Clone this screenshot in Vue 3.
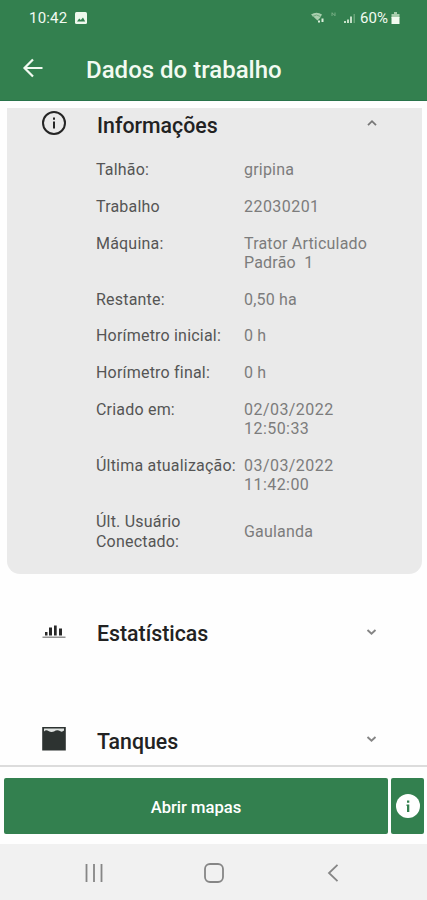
<!-- Job details screen: general information, statistics and tanks -->
<template>
  <div class="screen">
    <header class="header">
      <div class="status-bar">
        <span class="clock">10:42</span>
        <svg class="picture-icon" width="12" height="12" viewBox="0 0 12 12">
          <rect width="12" height="12" rx="1.5" fill="#eef8ed" />
          <path d="M2 9.5 4.2 6.5 5.8 8 8 5.5 10.2 9.5Z" fill="#33804f" />
        </svg>
        <div class="status-right">
          <svg width="50" height="14" viewBox="0 0 50 14">
            <path d="M1 3.500Q6.500 0 12 3.500L10 7 7.500 9.500Z" fill="#a9cfae" />
            <path d="M2.500 5.500Q6.500 2.500 10.500 5.500" fill="none" stroke="#6fa97e" />
            <path d="M8 11.500V9.500H10V11.500ZM11.500 11V7.500H13.500V11Z" fill="#dcefdc" />
            <path d="M22 1.500V5M22 2L25 4.500M25 1.500V5" fill="none" stroke="#75ac83" stroke-width="1" />
            <path d="M34 12V10H36V12ZM37 12V8.500H39V12ZM40 12V5.500H42V12Z" fill="#c5e0c8" />
            <path d="M43.500 12V3H45V12Z" fill="#69a579" />
          </svg>
          <span class="battery-text">60%</span>
          <svg width="9" height="13" viewBox="0 0 9 13">
            <path d="M3 0H6V2H8.500V6H.5V2H3Z" fill="#a7cdac" />
            <path d="M.5 5H8.500V12H.5Z" fill="#f1faef" />
          </svg>
        </div>
      </div>
      <div class="title-bar">
        <svg class="back" width="22" height="20" viewBox="0 0 22 20">
          <path d="M20.500 10H2.500M11 1.500 2.500 10 11 18.500" fill="none" stroke="#f2faf1" stroke-width="2.200" />
        </svg>
        <h1>Dados do trabalho</h1>
      </div>
    </header>

    <main class="content">
      <section class="card">
        <div class="section-head" @click="infoOpen = !infoOpen">
          <svg class="section-icon info-icon" width="26" height="26" viewBox="0 0 26 26">
            <circle cx="13" cy="13" r="11" fill="none" stroke="#252525" stroke-width="2" />
            <path d="M12 7.500H14V9.700H12ZM12 11.500H14V18.500H12Z" fill="#252525" />
          </svg>
          <h2>Informações</h2>
          <svg class="chevron up" :class="{ closed: !infoOpen }" width="12" height="8" viewBox="0 0 12 8">
            <path d="M2 6.200 6 2.200 10 6.200" fill="none" stroke="#777" stroke-width="1.800" />
          </svg>
        </div>
        <div v-show="infoOpen" class="rows">
          <div v-for="row in rows" :key="row.label" class="row">
            <span class="label">{{ row.label }}</span>
            <span class="value" :class="{ numeric: row.numeric }">{{ row.value }}</span>
          </div>
        </div>
      </section>

      <section class="section-head stats">
        <svg class="section-icon" width="26" height="26" viewBox="0 0 26 26">
          <path d="M4 16.500V13H6.500V16.500ZM8 16.500V8.500H11V16.500ZM13 16.500V6.500H15.700V16.500ZM18 16.500V9.500H21V16.500Z" fill="#292929" />
          <path d="M1.500 18.200H24.500" stroke="#777" stroke-width="1.200" />
        </svg>
        <h2>Estatísticas</h2>
        <svg class="chevron" width="12" height="8" viewBox="0 0 12 8">
          <path d="M1.500 2 5.500 5.700 9.500 2" fill="none" stroke="#858585" stroke-width="1.900" />
        </svg>
      </section>

      <section class="section-head tanks">
        <svg class="section-icon" width="26" height="26" viewBox="0 0 26 26">
          <path d="M1.200 1H24.800V24.500H1.200Z" fill="#2d3331" />
          <path d="M3 2.500H23V4.500Q21 6.500 19 5 16 3.500 13 5.500 10 6.500 7.500 5 5 3.500 3 5.500Z" fill="#dfe3e1" />
        </svg>
        <h2>Tanques</h2>
        <svg class="chevron" width="12" height="8" viewBox="0 0 12 8">
          <path d="M1.500 2 5.500 5.700 9.500 2" fill="none" stroke="#858585" stroke-width="1.900" />
        </svg>
      </section>
    </main>

    <footer class="actions">
      <button class="open-maps">Abrir mapas</button>
      <button class="info-button">
        <svg width="24" height="24" viewBox="0 0 24 24">
          <circle cx="12" cy="12" r="12" fill="#fff" />
          <path d="M11 6.500H13.300V8.700H11ZM10.500 10.500H13.300V18H11V12H10.500Z" fill="#33804f" />
        </svg>
      </button>
    </footer>

    <nav class="nav-bar">
      <svg width="18" height="18" viewBox="0 0 18 18">
        <path d="M1.500 0V18M9 0V18M16.500 0V18" stroke="#868686" stroke-width="1.800" />
      </svg>
      <svg class="home" width="20" height="20" viewBox="0 0 20 20">
        <rect x="1" y="1" width="18" height="18" rx="5" fill="none" stroke="#868686" stroke-width="1.800" />
      </svg>
      <svg width="12" height="18" viewBox="0 0 12 18">
        <path d="M10.500 .8 2 9 10.500 17.200" fill="none" stroke="#868686" stroke-width="1.800" />
      </svg>
    </nav>
  </div>
</template>

<script setup>
import { ref } from 'vue';

const infoOpen = ref(true);

const rows = [
  { label: 'Talhão:', value: 'gripina' },
  { label: 'Trabalho', value: '22030201', numeric: true },
  { label: 'Máquina:', value: 'Trator Articulado\nPadrão  1' },
  { label: 'Restante:', value: '0,50 ha' },
  { label: 'Horímetro inicial:', value: '0 h' },
  { label: 'Horímetro final:', value: '0 h' },
  { label: 'Criado em:', value: '02/03/2022\n12:50:33', numeric: true },
  { label: 'Última atualização:', value: '03/03/2022\n11:42:00', numeric: true },
  { label: 'Últ. Usuário\nConectado:', value: 'Gaulanda' },
];
</script>

<style>
body {
  margin: 0;
}
</style>

<style scoped>
.screen {
  width: 427px;
  height: 900px;
  display: flex;
  flex-direction: column;
  overflow: hidden;
  background-color: #fefefe;
  font-family: Roboto, "Liberation Sans", sans-serif;
}

.header {
  height: 101px;
  flex: none;
  box-sizing: border-box;
  background-color: #33804f;
  border-bottom: 1px solid #28734a;
  color: #f2faf1;
}

.status-bar {
  height: 36px;
  display: flex;
  align-items: center;
  padding: 0 27px 0 29px;
}

.clock {
  width: 46px;
  font-size: 15px;
  letter-spacing: 0.2px;
}

.status-right {
  display: flex;
  align-items: center;
  margin-left: auto;
}

.battery-text {
  width: 31px;
  font-size: 15px;
  letter-spacing: 0.1px;
}

.title-bar {
  height: 64px;
  display: flex;
  align-items: center;
  padding-left: 22px;
}

.title-bar h1 {
  margin: 4px 0 0 42px;
  font-size: 24px;
  font-weight: 500;
}

.content {
  height: 657px;
  flex: none;
  padding: 7px 5px 0 7px;
  border-bottom: 2px solid #dcdcdc;
}

.card {
  height: 466px;
  background-color: #eaeaea;
  border-radius: 0 0 13px 13px;
}

.section-head {
  height: 32px;
  display: flex;
  align-items: center;
  padding: 0 44px 0 34px;
}

.section-head h2 {
  margin: 2px auto 0 30px;
  font-size: 21.300px;
  font-weight: 500;
  color: #222;
}

.info-icon,
.chevron.up {
  margin-bottom: 2px;
}

.chevron.closed {
  transform: rotate(180deg);
}

.stats {
  margin-top: 42px;
}

.tanks {
  margin-top: 75px;
}

.tanks h2 {
  margin-top: 4px;
}

.rows {
  display: flex;
  flex-direction: column;
  gap: 17.500px;
  padding: 20px 0 0 89px;
}

.row {
  display: grid;
  grid-template-columns: 148px 1fr;
  align-items: center;
  font-size: 16px;
  line-height: 19.300px;
  letter-spacing: 0.2px;
  white-space: pre;
}

.row:not(:last-child) {
  align-items: start;
}

.label {
  color: #555;
}

.value {
  color: #7c7c7c;
}

.value.numeric {
  letter-spacing: 0.45px;
}

.actions {
  height: 77px;
  flex: none;
  box-sizing: border-box;
  display: flex;
  gap: 3px;
  padding: 11px 3px 10px 4px;
}

.actions button {
  border: none;
  border-radius: 2px;
  background-color: #33804f;
  color: #fff;
  font-family: inherit;
  cursor: pointer;
}

.actions .open-maps {
  flex: 1;
  padding: 2px 0 0;
  font-size: 16.600px;
  font-weight: 500;
}

.actions .info-button {
  width: 33px;
  padding: 0;
  display: flex;
  align-items: center;
  justify-content: center;
}

.nav-bar {
  flex: 1;
  display: flex;
  align-items: center;
  justify-content: space-between;
  padding: 2px 88px 0 85px;
  background-color: #f1f1f1;
}

.home {
  margin-right: 3px;
}
</style>
